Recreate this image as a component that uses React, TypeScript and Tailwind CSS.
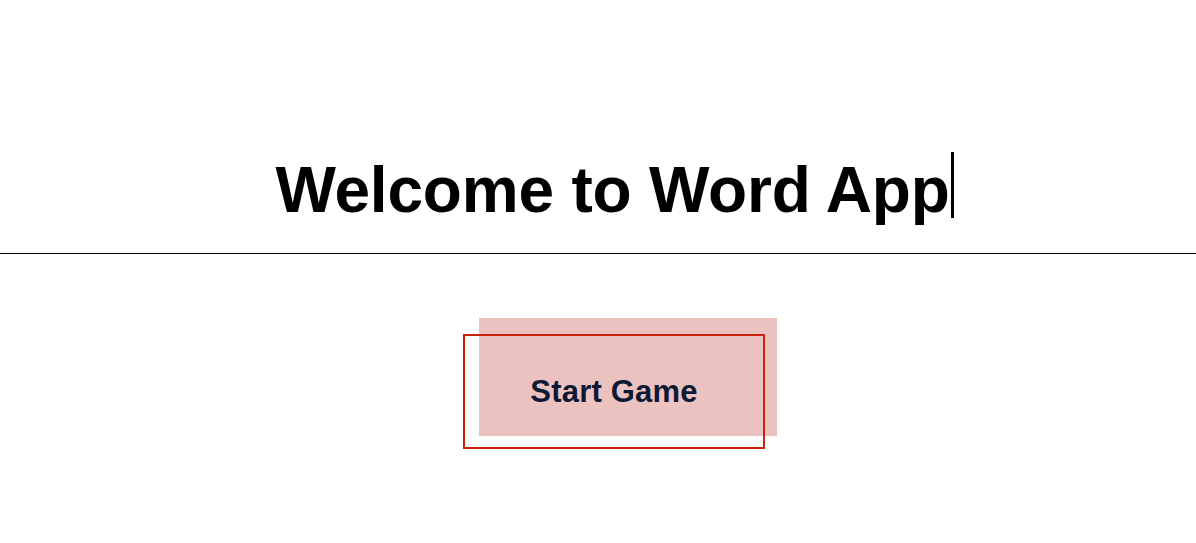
export default function App() {
  return (
    <div className="w-[1196px] h-[543px] bg-white overflow-hidden" style={{ fontFamily: '"Liberation Sans", Arial, sans-serif' }}>
      <header className="h-[254px] border-b border-black flex justify-center items-start pt-[158px] pl-[33px]">
        <h1 className="text-[64px] leading-none font-bold text-black tracking-[-0.2px]">Welcome to Word App</h1>
        <span className="inline-block w-[3px] h-[66px] bg-black ml-[1px] -mt-[6px]"></span>
      </header>
      <div className="flex justify-center pt-[80px] pl-[32px]">
        <button className="relative w-[302px] h-[115px] flex items-center justify-center">
          <span className="absolute left-[16px] -top-[16px] w-[298px] h-[118px] bg-[#ecc2c1]"></span>
          <span className="absolute inset-0 border-2 border-[#c9230c]"></span>
          <span className="relative text-[31px] leading-none font-bold text-[#0d1a33] tracking-[0.2px] mt-[-1px]">Start Game</span>
        </button>
      </div>
    </div>
  );
}
